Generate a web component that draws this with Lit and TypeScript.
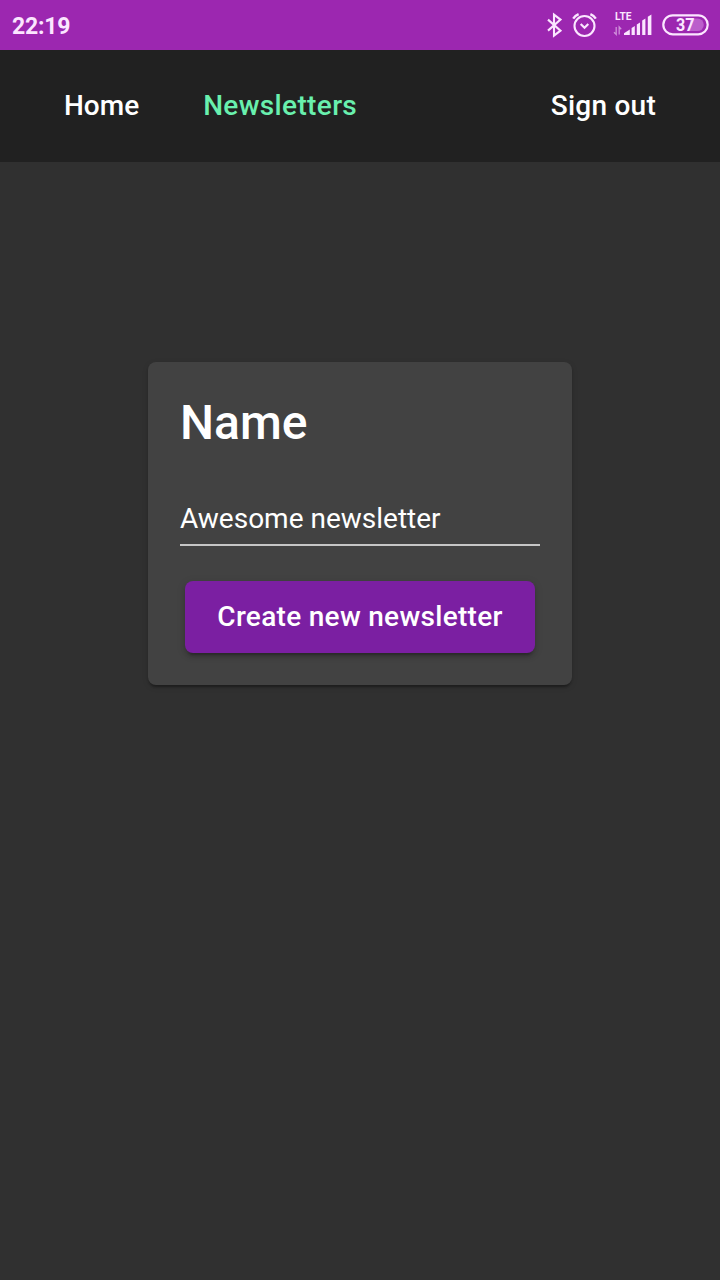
import { LitElement, html, css } from "lit";
import { customElement, property } from "lit/decorators.js";

@customElement("status-bar")
class StatusBar extends LitElement {
  @property() time = "";
  static styles = css`
    :host {
      display: flex;
      justify-content: space-between;
      height: 50px;
      background: #9c27b0;
      color: #fbe6ff;
    }
    .time {
      padding-left: 12px;
      font-size: 23px;
      font-weight: 700;
      line-height: 54px;
      letter-spacing: -0.2px;
    }
    svg {
      display: block;
    }
    .lte {
      font: 700 10px/1 Roboto, sans-serif;
    }
    .level {
      font: 700 18px/1 Roboto, sans-serif;
    }
  `;
  render() {
    return html`
      <div class="time">${this.time}</div>
      <svg width="180" height="50" viewBox="540 0 180 50" fill="none" stroke="#fbe6ff">
        <path d="M548 19.6 560.5 30.6 554 35.6V14.6L560.5 19.6 548 30.6" stroke-width="2.1" />
        <circle cx="584.5" cy="26" r="10" stroke-width="2.1" />
        <path d="m580.7 24 3.8 3.7 3.8-3.7" stroke-width="2.2" />
        <path d="M573.2 18.6q1.7-2.8 5.4-4.4M595.8 18.6q-1.7-2.8-5.4-4.4" stroke-width="2.4" />
        <g stroke="none" fill="#fbe6ff">
          <text class="lte" x="615" y="20" textLength="16.5" lengthAdjust="spacingAndGlyphs">LTE</text>
          <path
            d="M624 35v-1.8l5.8-3.6V35zM631.6 35v-7l3.2-2v9zM636.8 35V24.5l3.2-2V35zM642.2 35V20.5l3.2-2V35zM647.8 35V16.8l3.6-2.2V35z"
          />
        </g>
        <path d="M616.2 27v7.5l-2.2-2.3M619.2 34.5V27l2 2.3" stroke-width="1.3" opacity=".55" />
        <rect x="663.3" y="15.3" width="44.4" height="19" rx="9.5" stroke-width="2.2" />
        <path d="M690 18.5h7.5a6.3 6.3 0 0 1 0 12.6H690z" stroke="none" fill="#bb5fcb" />
        <text class="level" x="676" y="31.2" stroke="none" fill="#fbe6ff" textLength="18.5" lengthAdjust="spacingAndGlyphs">37</text>
      </svg>
    `;
  }
}

@customElement("nav-bar")
class NavBar extends LitElement {
  static styles = css`
    :host {
      display: flex;
      align-items: center;
      height: 112px;
      padding: 0 64px 2px;
      gap: 64px;
      box-sizing: border-box;
      background: #212121;
      font-size: 28px;
      font-weight: 500;
    }
    a {
      color: #fff;
    }
    .active {
      color: #69f0ae;
      letter-spacing: 0.35px;
    }
    .end {
      margin-left: auto;
      letter-spacing: 0.25px;
    }
  `;
  render() {
    return html`<a>Home</a><a class="active">Newsletters</a><a class="end">Sign out</a>`;
  }
}

@customElement("newsletter-form")
class NewsletterForm extends LitElement {
  static styles = css`
    :host {
      display: flex;
      flex-direction: column;
      width: 424px;
      height: 323px;
      box-sizing: border-box;
      padding: 32px;
      border-radius: 8px;
      background: #424242;
      color: #fff;
      box-shadow: 0 4px 2px -2px rgba(0, 0, 0, 0.2), 0 2px 2px rgba(0, 0, 0, 0.14),
        0 2px 6px rgba(0, 0, 0, 0.12);
    }
    h1 {
      margin: 0;
      font-size: 48px;
      font-weight: 500;
      line-height: 58px;
    }
    .field {
      margin-top: 48px;
      height: 46px;
      box-sizing: border-box;
      border-bottom: 2px solid #c6c6c6;
      font-size: 28px;
      line-height: 38px;
    }
    button {
      align-self: center;
      margin-top: 35px;
      width: 350px;
      height: 72px;
      padding: 0;
      border: 0;
      border-radius: 8px;
      background: #7b1fa2;
      color: #fff;
      font: 500 28px/72px Roboto, sans-serif;
      letter-spacing: 0.3px;
      box-shadow: 0 6px 2px -4px rgba(0, 0, 0, 0.2), 0 4px 4px rgba(0, 0, 0, 0.14),
        0 2px 10px rgba(0, 0, 0, 0.12);
    }
  `;
  render() {
    return html`
      <h1>Name</h1>
      <div class="field">Awesome newsletter</div>
      <button>Create new newsletter</button>
    `;
  }
}

@customElement("app-root")
class AppRoot extends LitElement {
  static styles = css`
    :host {
      display: flex;
      flex-direction: column;
      height: 1280px;
      background: #303030;
      font-family: Roboto, sans-serif;
    }
    main {
      display: flex;
      justify-content: center;
      padding-top: 200px;
    }
  `;
  render() {
    return html`
      <status-bar time="22:19"></status-bar>
      <nav-bar></nav-bar>
      <main><newsletter-form></newsletter-form></main>
    `;
  }
}
